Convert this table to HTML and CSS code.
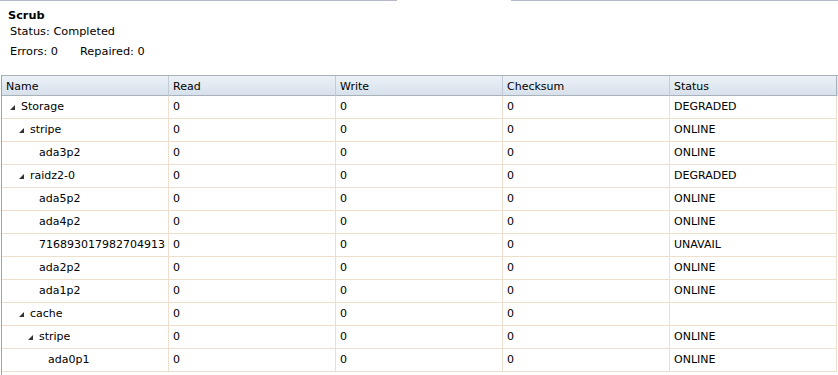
FILE: index.html
```html
<!DOCTYPE html>
<html lang="en">
<head>
  <meta charset="UTF-8" />
  <title>Pool Status</title>
  <link rel="stylesheet" href="styles.css">
</head>
<body>

  <div class="tab-strip">
    <div class="tab-line"></div>
    <div class="tab-gap"></div>
    <div class="tab-line fill"></div>
  </div>

  <div class="summary">
    <div class="title">Scrub</div>
    <div class="line">Status: Completed</div>
    <div class="line counts">
      <span>Errors: 0</span>
      <span>Repaired: 0</span>
    </div>
  </div>

  <div class="grid">
    <div class="row head">
      <div class="cell">Name</div>
      <div class="cell">Read</div>
      <div class="cell">Write</div>
      <div class="cell">Checksum</div>
      <div class="cell">Status</div>
    </div>

    <div class="row">
      <div class="cell name lvl1"><span class="expander"><svg width="5" height="5" viewBox="0 0 5 5"><polygon points="5,0 5,5 0,5"/></svg></span>Storage</div>
      <div class="cell">0</div><div class="cell">0</div><div class="cell">0</div><div class="cell">DEGRADED</div>
    </div>
    <div class="row">
      <div class="cell name lvl2"><span class="expander"><svg width="5" height="5" viewBox="0 0 5 5"><polygon points="5,0 5,5 0,5"/></svg></span>stripe</div>
      <div class="cell">0</div><div class="cell">0</div><div class="cell">0</div><div class="cell">ONLINE</div>
    </div>
    <div class="row">
      <div class="cell name lvl3"><span class="expander"></span>ada3p2</div>
      <div class="cell">0</div><div class="cell">0</div><div class="cell">0</div><div class="cell">ONLINE</div>
    </div>
    <div class="row">
      <div class="cell name lvl2"><span class="expander"><svg width="5" height="5" viewBox="0 0 5 5"><polygon points="5,0 5,5 0,5"/></svg></span>raidz2-0</div>
      <div class="cell">0</div><div class="cell">0</div><div class="cell">0</div><div class="cell">DEGRADED</div>
    </div>
    <div class="row">
      <div class="cell name lvl3"><span class="expander"></span>ada5p2</div>
      <div class="cell">0</div><div class="cell">0</div><div class="cell">0</div><div class="cell">ONLINE</div>
    </div>
    <div class="row">
      <div class="cell name lvl3"><span class="expander"></span>ada4p2</div>
      <div class="cell">0</div><div class="cell">0</div><div class="cell">0</div><div class="cell">ONLINE</div>
    </div>
    <div class="row">
      <div class="cell name lvl3"><span class="expander"></span>716893017982704913</div>
      <div class="cell">0</div><div class="cell">0</div><div class="cell">0</div><div class="cell">UNAVAIL</div>
    </div>
    <div class="row">
      <div class="cell name lvl3"><span class="expander"></span>ada2p2</div>
      <div class="cell">0</div><div class="cell">0</div><div class="cell">0</div><div class="cell">ONLINE</div>
    </div>
    <div class="row">
      <div class="cell name lvl3"><span class="expander"></span>ada1p2</div>
      <div class="cell">0</div><div class="cell">0</div><div class="cell">0</div><div class="cell">ONLINE</div>
    </div>
    <div class="row">
      <div class="cell name lvl2"><span class="expander"><svg width="5" height="5" viewBox="0 0 5 5"><polygon points="5,0 5,5 0,5"/></svg></span>cache</div>
      <div class="cell">0</div><div class="cell">0</div><div class="cell">0</div><div class="cell"></div>
    </div>
    <div class="row">
      <div class="cell name lvl3"><span class="expander"><svg width="5" height="5" viewBox="0 0 5 5"><polygon points="5,0 5,5 0,5"/></svg></span>stripe</div>
      <div class="cell">0</div><div class="cell">0</div><div class="cell">0</div><div class="cell">ONLINE</div>
    </div>
    <div class="row">
      <div class="cell name lvl4"><span class="expander"></span>ada0p1</div>
      <div class="cell">0</div><div class="cell">0</div><div class="cell">0</div><div class="cell">ONLINE</div>
    </div>
  </div>

</body>
</html>
```

FILE: styles.css
```css
* { box-sizing: border-box; }

html, body {
  height: 100%;
}

body {
  margin: 0;
  font-family: 'DejaVu Sans', Verdana, sans-serif;
  font-size: 11px;
  color: #000;
  background: #fff;
  display: flex;
  flex-direction: column;
  overflow: hidden;
}

.tab-strip {
  display: flex;
  height: 1px;
}

.tab-line {
  width: 397px;
  background: #b5b8c8;
}

.tab-gap {
  width: 114px;
}

.tab-line.fill {
  flex: 1;
}

.summary {
  padding: 7px 0 0 8px;
  font-size: 11.3px;
}

.title {
  font-weight: bold;
  line-height: 16px;
}

.line {
  margin-left: 2px;
  line-height: 16px;
}

.counts {
  display: flex;
  gap: 22px;
  margin-top: 4px;
}

.grid {
  flex: 1;
  margin: 15px 0 0 1px;
  border-left: 1px solid #a3a3a3;
}

.row {
  display: grid;
  grid-template-columns: repeat(5, 167px);
  height: 23px;
}

.cell {
  display: flex;
  align-items: center;
  padding: 0 0 2px 4px;
  border-right: 1px solid #eedfcd;
  border-bottom: 1px solid #eedfcd;
  white-space: nowrap;
  overflow: hidden;
}

.row.head {
  height: 21px;
  border-top: 1px solid #a9b1ba;
  background: linear-gradient(#ecf1f7, #d6e0ea);
}

.row.head .cell {
  padding: 1px 0 0 4px;
  border-right: 1px solid #c3ccd6;
  border-bottom: 1px solid #a9b1ba;
}

.row.head .cell:last-child {
  border-right-color: #a9b1ba;
}

.name.lvl1 { padding-left: 8px; }
.name.lvl2 { padding-left: 17px; }
.name.lvl3 { padding-left: 26px; }
.name.lvl4 { padding-left: 35px; }

.expander {
  width: 11px;
  flex-shrink: 0;
  display: flex;
  align-items: center;
  padding-top: 3px;
}

.expander svg {
  fill: #333;
}
```
